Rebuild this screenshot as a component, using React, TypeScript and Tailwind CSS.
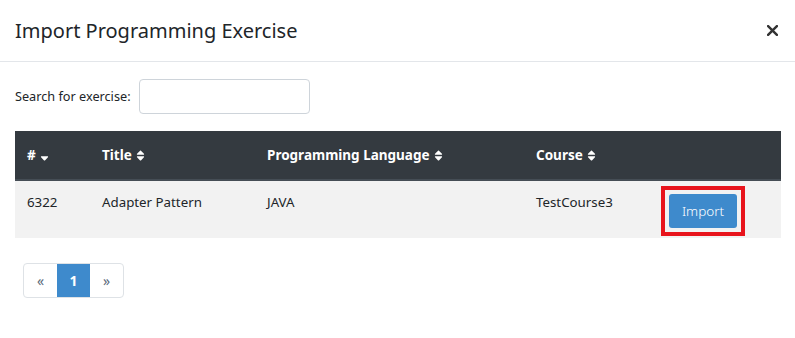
import React from 'react';

const SortBoth: React.FC = () => (
  <svg width="9" height="13" viewBox="0 0 320 512" className="inline-block ml-1 -mt-0.5 fill-white">
    <path d="M41 288h238c21.4 0 32.1 25.9 17 41L177 448c-9.4 9.4-24.6 9.4-33.9 0L24 329c-15.1-15.1-4.4-41 17-41zm255-105L177 64c-9.4-9.4-24.6-9.4-33.9 0L24 183c-15.1 15.1-4.4 41 17 41h238c21.4 0 32.1-25.9 17-41z" />
  </svg>
);

const SortDown: React.FC = () => (
  <svg width="9" height="13" viewBox="0 0 320 512" className="inline-block ml-1 -mt-0.5 fill-white">
    <path d="M41 288h238c21.4 0 32.1 25.9 17 41L177 448c-9.4 9.4-24.6 9.4-33.9 0L24 329c-15.1-15.1-4.4-41 17-41z" />
  </svg>
);

const rows = [{ id: 6322, title: 'Adapter Pattern', language: 'JAVA', course: 'TestCourse3' }];

const App: React.FC = () => {
  return (
    <div className="w-[795px] h-[338px] bg-white text-[#212529] font-['Noto_Sans','Open_Sans',sans-serif] text-[14px]">
      <div className="flex items-center justify-between h-[62px] px-[15px] border-b border-[#e3e6ea]">
        <h4 className="text-[20px] leading-none text-[#212529] mt-[1px]">Import Programming Exercise</h4>
        <button className="mr-[2px] text-[#333]">
          <svg width="11" height="11" viewBox="0 0 10 10" stroke="currentColor" strokeWidth="2.2" strokeLinecap="square">
            <path d="M1 1L9 9M9 1L1 9" />
          </svg>
        </button>
      </div>

      <div className="px-[15px] pt-[17px]">
        <div className="flex items-center gap-[8px]">
          <label className="text-[12.7px]">Search for exercise:</label>
          <input className="w-[171px] h-[35px] border border-[#ced4da] rounded-[4px] outline-none" />
        </div>

        <table className="mt-[17px] w-[766px] border-collapse table-fixed">
          <colgroup>
            <col className="w-[75px]" />
            <col className="w-[165px]" />
            <col className="w-[269px]" />
            <col className="w-[125px]" />
            <col />
          </colgroup>
          <thead>
            <tr className="bg-[#343a40] text-white font-bold text-[13.5px] h-[49px] border-b-2 border-[#454d55]">
              <th className="text-left px-[12px]">
                #<SortDown />
              </th>
              <th className="text-left px-[12px]">
                Title<SortBoth />
              </th>
              <th className="text-left px-[12px]">
                Programming Language<SortBoth />
              </th>
              <th className="text-left px-[12px]">
                Course<SortBoth />
              </th>
              <th></th>
            </tr>
          </thead>
          <tbody>
            {rows.map(r => (
              <tr key={r.id} className="bg-[#f2f2f2] h-[58px] text-[13.3px]">
                <td className="px-[12px] align-top pt-[12px]">{r.id}</td>
                <td className="px-[12px] align-top pt-[12px]">{r.title}</td>
                <td className="px-[12px] align-top pt-[12px]">{r.language}</td>
                <td className="px-[12px] align-top pt-[12px]">{r.course}</td>
                <td className="px-[12px] align-top pt-[5px]">
                  <div className="inline-block border-[4px] border-[#e8141c] p-[4px]">
                    <button className="block w-[68px] h-[34px] bg-[#3e8acc] text-white rounded-[3px] text-[13.5px] font-light">
                      Import
                    </button>
                  </div>
                </td>
              </tr>
            ))}
          </tbody>
        </table>

        <div className="mt-[25px] ml-[8px] flex w-fit border border-[#dee2e6] rounded-[4px] overflow-hidden h-[35px] text-[14px]">
          <span className="w-[33px] flex items-center justify-center text-[#5a6a7a]">«</span>
          <span className="w-[33px] flex items-center justify-center bg-[#3e8acc] text-white font-bold">1</span>
          <span className="w-[33px] flex items-center justify-center text-[#5a6a7a]">»</span>
        </div>
      </div>
    </div>
  );
};

export default App;
